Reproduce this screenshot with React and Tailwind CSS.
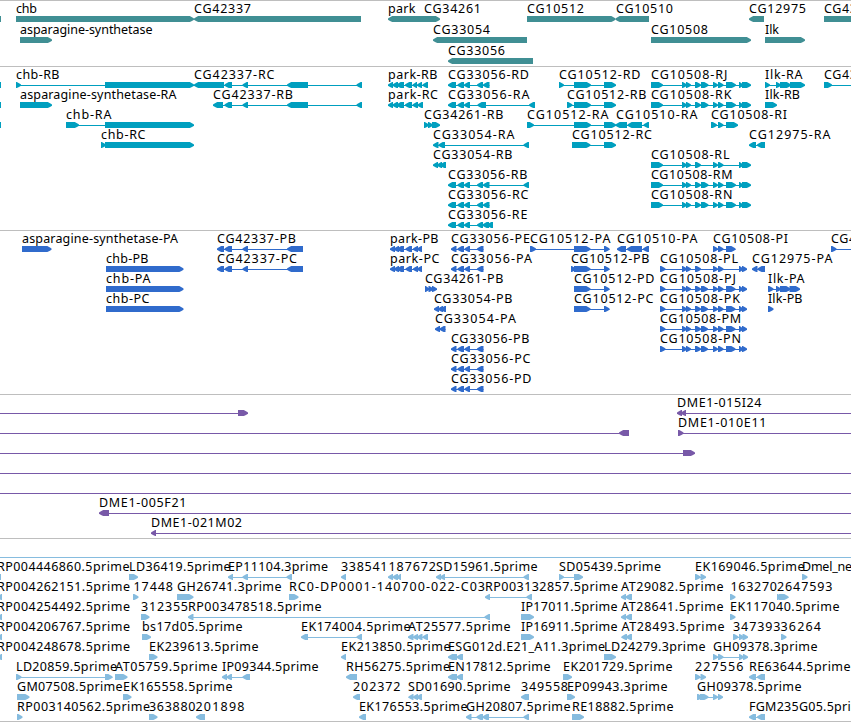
import React from 'react';

const R = 1;
const L = -1;

// Exon structures shared by several features: [start, end]
const CG33056_HEAD = [[448, 456], [457.5, 464], [464, 470]];
const CG33056_FULL = [...CG33056_HEAD, [477, 483], [483, 489.5]];
const CG33056_CDS = [[451, 456.5], [457.5, 464], [464.5, 470], [477, 483.5]];
const CG10508_FULL = [[651, 663], [682, 687], [686, 691], [695, 701], [701, 708.5], [713, 718], [718, 723.5], [726, 736], [739, 743.5], [742, 751]];
const CG10508_RL = [[651, 663], [682, 687], [686, 691], [695, 701], [713, 718], [718, 723.5], [739, 743.5], [742, 751]];
const CG10508_CDS = [[660, 665.5], [682, 687], [686, 691], [695, 701], [701, 708], [713, 718], [718, 723.5], [726, 735.5], [739, 743.5], [742, 747]];
const CG10508_PL = [[660, 665.5], [682, 687], [686, 691], [695, 701], [713, 718], [718, 723.5], [739, 743.5], [742, 747]];
const PARK_CDS = [[390, 395], [394, 399], [397, 404], [405.5, 412], [413, 418], [417, 422]];
const AT_PAIR = [[621, 626], [625.5, 632]];
const RE_PAIR = [[749, 756], [757, 765]];

// Feature: [row, label, label start, label end, strand, exons, line start?, line end?]
const genes = [
    [0, '', 0, 0, 0, [[-9, 1]]],
    [0, 'chb', 16, 37, R, [[16, 194]]],
    [0, 'CG42337', 194, 251, L, [[194, 361]]],
    [0, 'park', 388, 415.5, L, [[388, 428]]],
    [0, 'CG34261', 424, 481, R, [[424, 440]]],
    [0, 'CG10512', 527, 584, R, [[527, 615.5]]],
    [0, 'CG10510', 616, 673, L, [[615.5, 649]]],
    [0, 'CG12975', 749, 806, L, [[749, 764]]],
    [0, 'CG43', 824, 857, R, [[824, 880]]],
    [1, 'asparagine-synthetase', 20, 152.5, R, [[20, 52]]],
    [1, 'CG33054', 433, 490, L, [[433, 527]]],
    [1, 'CG10508', 651, 708, R, [[651, 751]]],
    [1, 'Ilk', 765, 779, R, [[765, 805]]],
    [2, 'CG33056', 448, 505, L, [[448, 533]]],
];

const transcripts = [
    [0, '', 0, 0, 0, [[-9, 1]]],
    [1, '', 0, 0, 0, [[-9, 1]]],
    [2, '', 0, 0, 0, [[-9, 1]]],
    [0, 'chb-RB', 16, 59.5, R, [[16, 21], [105, 194]]],
    [0, 'CG42337-RC', 194, 274.5, L, [[194, 224], [224.5, 232], [242.5, 248], [287, 308], [356.5, 362]]],
    [1, 'asparagine-synthetase-RA', 20, 176.5, R, [[20, 52]]],
    [1, 'CG42337-RB', 213, 293, L, [[213, 223], [224.5, 232], [242.5, 248], [287, 308], [356.5, 362]]],
    [2, 'chb-RA', 66, 111.5, R, [[66, 79], [105, 194]]],
    [3, 'chb-RC', 101, 145.5, R, [[101, 106], [105, 194]]],
    [0, 'park-RB', 388, 437.5, L, [[388, 393], [392.5, 398], [396.5, 404], [405, 412], [412.5, 417], [417, 422], [422.5, 428]]],
    [1, 'park-RC', 388, 438, L, [[388, 393], [392.5, 398], [396.5, 404], [405, 412], [412.5, 418], [417.5, 423]]],
    [0, 'CG33056-RD', 448, 529, L, CG33056_FULL],
    [1, 'CG33056-RA', 448, 529.5, L, [...CG33056_HEAD, [477.5, 486], [529, 535]]],
    [2, 'CG34261-RB', 424, 503.5, R, [[424, 429], [428, 433], [432, 440]]],
    [3, 'CG33054-RA', 433, 514.5, L, [[433, 438.5], [438.5, 445], [523.5, 529]]],
    [4, 'CG33054-RB', 433, 512.5, L, [[433, 438], [437, 442], [440, 446]]],
    [5, 'CG33056-RB', 448, 527.5, L, [...CG33056_FULL, [523.5, 529]]],
    [6, 'CG33056-RC', 448, 528.5, L, CG33056_FULL],
    [7, 'CG33056-RE', 448, 527.5, L, [...CG33056_HEAD, [477, 483], [482.5, 489], [487, 493]]],
    [0, 'CG10512-RD', 559, 640.5, R, [[559, 564], [574, 591], [604, 616]]],
    [1, 'CG10512-RB', 567, 646.5, R, [[567, 572.5], [574, 591], [604, 616]]],
    [2, 'CG10512-RA', 527, 608.5, R, [[527, 534], [574, 591], [604, 616]]],
    [3, 'CG10512-RC', 572, 652, R, [[572, 590.5], [604, 616]]],
    [2, 'CG10510-RA', 616, 697.5, L, [[615.5, 627], [627.5, 642], [643.5, 649]]],
    [0, 'CG10508-RJ', 651, 727.5, R, CG10508_FULL],
    [1, 'CG10508-RK', 651, 731.5, R, CG10508_FULL],
    [2, 'CG10508-RI', 711, 787, R, [[711, 717], [718, 723.5], [726, 738]]],
    [3, 'CG12975-RA', 749, 830.5, L, RE_PAIR],
    [4, 'CG10508-RL', 651, 729.5, R, CG10508_RL],
    [5, 'CG10508-RM', 651, 732.5, R, CG10508_FULL],
    [6, 'CG10508-RN', 651, 732.5, R, CG10508_FULL],
    [0, 'Ilk-RA', 765, 802.5, R, [[765, 770], [776, 781], [780, 791], [790, 805]]],
    [1, 'Ilk-RB', 765, 800, R, [[765, 777]]],
    [0, 'CG43', 824, 857, R, [[824, 832]], 824, 880],
];

const proteins = [
    [0, 'asparagine-synthetase-PA', 22, 178, R, [[22, 51.5]]],
    [1, 'chb-PB', 106, 148.5, R, [[106, 183.5]]],
    [2, 'chb-PA', 106, 150.5, R, [[106, 183.5]]],
    [3, 'chb-PC', 106, 149.5, R, [[106, 183.5]]],
    [0, 'CG42337-PB', 217, 296, L, [[217, 224], [224.5, 232], [242.5, 248], [287, 303]]],
    [1, 'CG42337-PC', 217, 297, L, [[217, 224], [224.5, 232], [242.5, 248], [287, 303]]],
    [0, 'park-PB', 390, 438.5, L, PARK_CDS],
    [1, 'park-PC', 390, 439.5, L, PARK_CDS],
    [0, 'CG33056-PE', 451, 530, L, CG33056_CDS],
    [1, 'CG33056-PA', 451, 532, L, CG33056_CDS],
    [2, 'CG34261-PB', 425, 503.5, R, [[425, 429.5], [428.5, 433.5], [432, 437]]],
    [3, 'CG33054-PB', 434, 512.5, L, [[434, 439], [438, 443], [440.5, 446]]],
    [4, 'CG33054-PA', 435, 516, L, [[435, 440], [439.5, 445.5]]],
    [5, 'CG33056-PB', 451, 529.5, L, CG33056_CDS],
    [6, 'CG33056-PC', 451, 530.5, L, CG33056_CDS],
    [7, 'CG33056-PD', 451, 531.5, L, CG33056_CDS],
    [0, 'CG10512-PA', 530, 610.5, R, [[530, 536], [574, 590.5], [604, 609.5]]],
    [1, 'CG10512-PB', 571, 649.5, R, [[571, 576], [574, 590.5], [604, 609.5]]],
    [2, 'CG10512-PD', 574, 654.5, R, [[574, 590.5], [604, 609.5]]],
    [3, 'CG10512-PC', 574, 653.5, R, [[574, 590.5], [604, 609.5]]],
    [0, 'CG10510-PA', 617, 697.5, L, [[617, 626], [627, 642], [643, 649]]],
    [0, 'CG10508-PI', 713, 788, R, [[713, 718], [718, 723.5], [726, 735.5]]],
    [1, 'CG10508-PL', 660, 738, R, CG10508_PL],
    [2, 'CG10508-PJ', 660, 736, R, CG10508_CDS],
    [3, 'CG10508-PK', 660, 740, R, CG10508_CDS],
    [4, 'CG10508-PM', 660, 741, R, CG10508_CDS],
    [5, 'CG10508-PN', 660, 741, R, CG10508_CDS],
    [1, 'CG12975-PA', 752, 832.5, L, [[752, 757.5], [757.5, 765]]],
    [2, 'Ilk-PA', 768, 804.5, R, [[768, 773.5], [776, 781], [780, 790.5], [789.5, 800]]],
    [3, 'Ilk-PB', 768, 802.5, R, [[768, 773.5]]],
    [0, 'CG43', 831, 864, R, [[831, 836.5]], 831, 880],
];

const bacs = [
    [0, '', 0, 0, R, [[238, 248]], 0, 248],
    [0, 'DME1-015I24', 677, 761.5, L, [[677, 682], [681, 686]], 677, 851],
    [1, '', 0, 0, L, [[619, 629]], 0, 629],
    [1, 'DME1-010E11', 678, 766.5, R, [[678, 683.5]], 678, 851],
    [2, '', 0, 0, R, [[683, 695]], 0, 695],
    [3, '', 0, 0, R, [], 0, 851],
    [4, '', 0, 0, R, [], 0, 851],
    [5, 'DME1-005F21', 99, 186.5, L, [[99, 109]], 99, 851],
    [6, 'DME1-021M02', 151, 242, L, [[151, 156]], 151, 851],
];

const ests = [
    [0, 'RP004446860.5prime', -3, 129.5, 0, [[-9, 1]]],
    [0, 'LD36419.5prime', 129, 230.5, R, [[129, 138]]],
    [0, 'EP11104.3prime', 228, 328, L, [[228, 233], [242.5, 248], [286.5, 292]]],
    [0, '338541', 341, 387.5, L, [[341, 346]]],
    [0, '187672', 388.5, 436, L, [[388, 393], [392.5, 398], [396.5, 401]]],
    [0, 'SD15961.5prime', 436, 537.5, L, [[436, 441], [440, 445], [523.5, 529]]],
    [0, 'SD05439.5prime', 559, 661, R, [[559, 564], [574, 583]]],
    [0, 'EK169046.5prime', 695, 804.5, R, [[695, 700.5], [700.5, 706]]],
    [0, 'Dmel_ne', 802, 852, R, [[802, 807.5]]],

    [1, 'RP004262151.5prime', -3, 130, L, [[-3, 2]]],
    [1, '17448', 133.5, 173, R, [[133, 138.5]]],
    [1, 'GH26741.3prime', 177, 281.5, R, [[177, 193.5]]],
    [1, 'RC0-DP0001-140700-022-C03', 289, 485, R, [[289, 298.5]]],
    [1, 'RP003132857.5prime', 485, 618, L, [[485, 490], [526.5, 532]]],
    [1, 'AT29082.5prime', 621, 723.5, L, AT_PAIR],
    [1, '163270', 730.5, 777, R, [[730, 735.5]]],
    [1, '2647593', 777, 832.5, R, [[777, 782], [779, 788.5]]],

    [2, 'RP004254492.5prime', -3, 130, L, [[-3, 2]]],
    [2, '312355', 141, 188, R, [[141, 149.5]]],
    [2, 'RP003478518.5prime', 188, 321.5, L, [[188, 193.5], [484.5, 490]]],
    [2, 'IP17011.5prime', 521, 617.5, R, [[521, 534]]],
    [2, 'AT28641.5prime', 621, 723.5, L, AT_PAIR],
    [2, 'EK117040.5prime', 730, 839.5, R, [[730, 735.5]]],

    [3, 'RP004206767.5prime', -3, 130, L, [[-3, 2]]],
    [3, 'bs17d05.5prime', 142, 242.5, R, [[142, 151]]],
    [3, 'EK174004.5prime', 301, 410.5, L, [[301, 308], [356.5, 362]]],
    [3, 'AT25577.5prime', 408, 510.5, L, [[408, 413.5], [413, 418], [417, 422.5], [422.5, 428]]],
    [3, 'IP16911.5prime', 521, 617.5, R, [[521, 534]]],
    [3, 'AT28493.5prime', 621.5, 724.5, L, [[621.5, 627], [626, 632]]],
    [3, '347393', 733, 780.5, R, [[733, 738.5], [739, 744], [742.5, 748]]],
    [3, '36264', 780.5, 821, R, [[781, 786.5]]],

    [4, 'RP004248678.5prime', -3, 130, L, [[-3, 2]]],
    [4, 'EK239613.5prime', 149, 258.5, R, [[149, 157.5]]],
    [4, 'EK213850.5prime', 341, 450.5, L, [[341, 346]]],
    [4, 'ESG012d.E21_A11.3prime', 448, 605, L, [[448, 457], [456.5, 463]]],
    [4, 'LD24279.3prime', 604, 705.5, R, [[604, 616]]],
    [4, 'GH09378.3prime', 713, 817.5, R, [[713, 718], [718, 723.5], [739, 744], [743, 748]]],

    [5, 'LD20859.5prime', 16, 117, R, [[16, 21.5], [105, 112.5]]],
    [5, 'AT05759.5prime', 115, 217.5, R, [[115, 127.5]]],
    [5, 'IP09344.5prime', 222, 318.5, L, [[222, 227], [226.5, 232], [242.5, 250]]],
    [5, 'RH56275.5prime', 346, 450, L, [[346, 357]]],
    [5, 'EN17812.5prime', 448, 550.5, L, [[448, 457], [456.5, 463]]],
    [5, 'EK201729.5prime', 563, 672.5, R, [[563, 572]]],
    [5, '227556', 695, 743.5, R, [[695, 700.5], [700.5, 706]]],
    [5, 'RE63644.5prime', 749, 850.5, L, RE_PAIR],

    [6, 'GM07508.5prime', 17, 122.5, R, [[17, 29.5]]],
    [6, 'EK165558.5prime', 123, 232.5, R, [[123, 131.5]]],
    [6, '202372', 353, 400.5, L, [[353, 360]]],
    [6, 'SD01690.5prime', 408, 510.5, L, [[408.5, 413.5], [413, 418], [416.5, 422]]],
    [6, '349558', 521, 568, L, [[521, 529]]],
    [6, 'EP09943.3prime', 567, 667.5, R, [[567, 575]]],
    [6, 'GH09378.5prime', 697, 801.5, R, [[697, 702.5], [700, 708.5], [713, 718], [718, 723]]],

    [7, 'RP003140562.5prime', 17, 150, R, [[17, 22.5]]],
    [7, '363880', 149, 195.5, R, [[149, 157.5]]],
    [7, '201898', 195.5, 244.5, L, [[196, 205]]],
    [7, 'EK176553.5prime', 359, 467.5, L, [[359, 366]]],
    [7, 'GH20807.5prime', 466, 570.5, L, [[466, 471.5], [476.5, 483], [482.5, 489], [523.5, 529]]],
    [7, 'RE18882.5prime', 572, 673.5, R, [[572, 584]]],
    [7, 'FGM235G05.5prime', 749, 870, L, RE_PAIR],
];

// Box with a slightly rounded 5px arrow head on the strand side
const exonPath = (s, e, y, strand) => {
    if (!strand) {
        return `M${s} ${y}H${e}V${y + 6}H${s}Z`;
    }
    const head = Math.min(5, e - s);
    const tip = strand === R ? e : s;
    const back = strand === R ? s : e;
    const neck = tip - strand * (head - 0.8);
    const mid = tip - strand * 2;
    return `M${back} ${y}H${neck}L${mid} ${y + 1.2}L${tip} ${y + 2.5}V${y + 3.8}L${mid} ${y + 5}L${neck} ${y + 6}H${back}Z`;
};

const Feature = ({ feature, pitch, offset }) => {
    const [row, label, x, end, strand, exons, from, to] = feature;
    const y = offset + row * pitch;
    const start = from ?? exons[0][0];
    const stop = to ?? exons[exons.length - 1][1];
    return (
        <g>
            {(exons.length !== 1 || to !== undefined) && (
                <rect x={start} y={y + 3} width={stop - start} height="1" />
            )}
            {exons.map(([s, e], i) => (
                <path key={i} d={exonPath(s, e, y, strand)} />
            ))}
            {label && (
                <text x={x} y={y - 3} textLength={end - x} className="fill-black">
                    {label}
                </text>
            )}
        </g>
    );
};

const Track = ({ features, className, pitch = 20, offset = 15, children }) => (
    <section className="border-t border-[#bebebe]">
        <svg className={`block w-full overflow-hidden font-['Noto_Sans','DejaVu_Sans',sans-serif] text-[12.5px] ${className}`}>
            {children}
            {features.map((feature, i) => (
                <Feature key={i} feature={feature} pitch={pitch} offset={offset} />
            ))}
        </svg>
    </section>
);

const App = () => {
    return (
        <div className="flex h-[722px] w-[851px] flex-col overflow-hidden border-b border-[#bebebe] bg-white">
            <Track features={genes} pitch={21} className="h-[65px] fill-[#408f94]" />
            <Track features={transcripts} className="h-[163px] fill-[#009fbf]" />
            <Track features={proteins} className="h-[163px] fill-[#306bcc]" />
            <Track features={bacs} className="h-[143px] fill-[#7859a8]" />
            <Track features={ests} offset={35} className="h-[182px] fill-[#86bcdf]">
                <rect x="0" y="18" width="851" height="1" />
            </Track>
        </div>
    );
};

export default App;
